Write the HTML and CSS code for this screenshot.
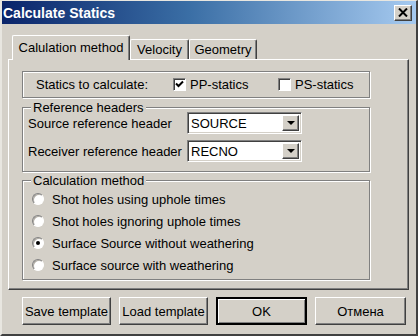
FILE: index.html
```html
<!DOCTYPE html>
<html lang="en">

<head>
    <meta charset="UTF-8">
    <meta name="viewport" content="width=device-width, initial-scale=1.0">
    <title>Calculate Statics</title>
    <link rel="stylesheet" href="styles.css">
</head>

<body>
    <div class="window">
        <div class="titlebar">
            <span class="title">Calculate Statics</span>
            <span class="close-btn">
                <svg width="10" height="9" viewBox="0 0 10 9">
                    <path d="M1 0.5 L9 8.5 M9 0.5 L1 8.5" stroke="#000" stroke-width="2" fill="none"/>
                </svg>
            </span>
        </div>
        <div class="dialog">
            <div class="tabs">
                <div class="tab active">Calulation method</div>
                <div class="tab tab-velocity">Velocity</div>
                <div class="tab tab-geometry">Geometry</div>
            </div>
            <div class="tab-panel">
                <div class="statics-box">
                    <span class="statics-label">Statics to calculate:</span>
                    <label class="check check-pp">
                        <span class="checkbox">
                            <svg width="9" height="9" viewBox="0 0 9 9">
                                <path d="M1 3.5 L3.5 6 L8 1.5" stroke="#000" stroke-width="2" fill="none"/>
                            </svg>
                        </span>
                        PP-statics
                    </label>
                    <label class="check">
                        <span class="checkbox"></span>
                        PS-statics
                    </label>
                </div>
                <fieldset class="group ref-group">
                    <legend>Reference headers</legend>
                    <div class="field-row">
                        <span class="field-label">Source reference header</span>
                        <div class="combo">
                            <span class="combo-value">SOURCE</span>
                            <span class="combo-btn"><span class="arrow"></span></span>
                        </div>
                    </div>
                    <div class="field-row">
                        <span class="field-label">Receiver reference header</span>
                        <div class="combo">
                            <span class="combo-value">RECNO</span>
                            <span class="combo-btn"><span class="arrow"></span></span>
                        </div>
                    </div>
                </fieldset>
                <fieldset class="group method-group">
                    <legend>Calculation method</legend>
                    <div class="radio-row"><span class="radio"></span>Shot holes using uphole times</div>
                    <div class="radio-row"><span class="radio"></span>Shot holes ignoring uphole times</div>
                    <div class="radio-row"><span class="radio checked"></span>Surface Source without weathering</div>
                    <div class="radio-row"><span class="radio"></span>Surface source with weathering</div>
                </fieldset>
            </div>
            <div class="buttons">
                <div class="btn btn-small">Save template</div>
                <div class="btn btn-small">Load template</div>
                <div class="btn btn-wide btn-default">OK</div>
                <div class="btn btn-wide">Отмена</div>
            </div>
        </div>
    </div>
</body>

</html>
```

FILE: styles.css
```css
body {
    margin: 0;
    font-family: "Liberation Sans", Arial, sans-serif;
    font-size: 13px;
    color: #000;
    background-color: #d4d0c8;
}

.window {
    width: 418px;
    height: 336px;
    box-sizing: border-box;
    display: flex;
    flex-direction: column;
    background-color: #d4d0c8;
    border: 2px solid;
    border-top-width: 1px;
    border-color: #e8e6e0 #404040 #404040 #e8e6e0;
}

.titlebar {
    height: 23px;
    display: flex;
    align-items: center;
    justify-content: space-between;
    padding-left: 1px;
    background: linear-gradient(to right, #0a246a, #3a6ea5 45%, #a6caf0);
}

.title {
    color: white;
    font-weight: bold;
    font-size: 14px;
}

.close-btn {
    width: 18px;
    height: 16px;
    box-sizing: border-box;
    margin-right: 4px;
    display: flex;
    align-items: center;
    justify-content: center;
    background-color: #d4d0c8;
    border: 1px solid;
    border-color: #fff #404040 #404040 #fff;
    box-shadow: inset -1px -1px 0 #808080;
}

.dialog {
    flex: 1;
    padding: 11px 7px 0 6px;
}

.tabs {
    display: flex;
    align-items: flex-end;
    margin-left: 4px;
    height: 24px;
}

.tab {
    height: 20px;
    box-sizing: border-box;
    display: flex;
    align-items: center;
    justify-content: center;
    border-top: 1px solid #fff;
    border-left: 1px solid #fff;
    border-right: 1px solid #404040;
    box-shadow: inset -1px 0 0 #808080;
    border-radius: 2px 2px 0 0;
    background-color: #d4d0c8;
}

.tab.active {
    position: relative;
    z-index: 1;
    width: 118px;
    height: 25px;
    margin-bottom: -1px;
    padding-bottom: 2px;
}

.tab-velocity {
    width: 59px;
}

.tab-geometry {
    width: 68px;
}

.tab-panel {
    height: 231px;
    box-sizing: border-box;
    border-top: 1px solid #fff;
    border-left: 1px solid #fff;
    border-right: 1px solid #404040;
    border-bottom: 1px solid #404040;
    box-shadow: inset -1px -1px 0 #808080;
    padding: 11px 0 0 13px;
}

.statics-box,
.group {
    width: 348px;
    box-sizing: border-box;
    border: 1px solid #808080;
    box-shadow: 1px 1px 0 #fff, inset 1px 1px 0 #fff;
}

.statics-box {
    height: 27px;
    display: flex;
    align-items: center;
    padding-left: 13px;
}

.statics-label {
    width: 137px;
}

.check {
    display: flex;
    align-items: center;
    gap: 4px;
}

.check-pp {
    width: 105px;
}

.checkbox {
    width: 13px;
    height: 13px;
    box-sizing: border-box;
    display: flex;
    align-items: center;
    justify-content: center;
    background-color: white;
    border: 1px solid;
    border-color: #808080 #fff #fff #808080;
    box-shadow: inset 1px 1px 0 #404040;
}

.group {
    margin: 2px 0 0 0;
    padding: 0 0 6px 5px;
    min-inline-size: auto;
}

.group legend {
    margin-left: 3px;
    padding: 0 2px;
    line-height: 15px;
    background-color: #d4d0c8;
}

.ref-group {
    padding-bottom: 9px;
}

.ref-group legend {
    margin-bottom: -3px;
}

.field-row {
    display: flex;
    align-items: center;
    height: 22px;
    margin-bottom: 6px;
}

.field-row:last-child {
    margin-bottom: 0;
}

.field-label {
    width: 159px;
}

.combo {
    width: 115px;
    height: 22px;
    box-sizing: border-box;
    display: flex;
    align-items: center;
    background-color: white;
    border: 1px solid;
    border-color: #808080 #fff #fff #808080;
    box-shadow: inset 1px 1px 0 #404040, inset -1px -1px 0 #d4d0c8;
    padding: 2px 2px 2px 3px;
}

.combo-value {
    flex: 1;
}

.combo-btn {
    width: 17px;
    height: 16px;
    box-sizing: border-box;
    display: flex;
    align-items: center;
    justify-content: center;
    background-color: #d4d0c8;
    border: 1px solid;
    border-color: #fff #404040 #404040 #fff;
    box-shadow: inset -1px -1px 0 #808080;
}

.arrow {
    width: 0;
    height: 0;
    border-left: 4px solid transparent;
    border-right: 4px solid transparent;
    border-top: 4px solid #000;
}

.method-group {
    margin-top: 1px;
    padding: 0 0 3px 5px;
}

.radio-row {
    display: flex;
    align-items: center;
    height: 22px;
    gap: 8px;
    margin-left: 4px;
}

.radio {
    width: 12px;
    height: 12px;
    box-sizing: border-box;
    display: flex;
    align-items: center;
    justify-content: center;
    border-radius: 50%;
    background-color: white;
    border: 1px solid;
    border-color: #808080 #fff #fff #808080;
    box-shadow: inset 1px 1px 0 #b0aca4;
}

.radio.checked::after {
    content: "";
    width: 4px;
    height: 4px;
    border-radius: 50%;
    background-color: #000;
}

.buttons {
    display: flex;
    gap: 8px;
    margin-top: 7px;
    padding-left: 14px;
}

.btn {
    height: 28px;
    box-sizing: border-box;
    display: flex;
    align-items: center;
    justify-content: center;
    border: 1px solid;
    border-color: #fff #404040 #404040 #fff;
    box-shadow: inset -1px -1px 0 #808080;
}

.btn-small {
    width: 89px;
}

.btn-wide {
    width: 91px;
}

.btn-default {
    border: 2px solid #000;
    box-shadow: inset 1px 1px 0 #fff, inset -1px -1px 0 #808080;
}
```
